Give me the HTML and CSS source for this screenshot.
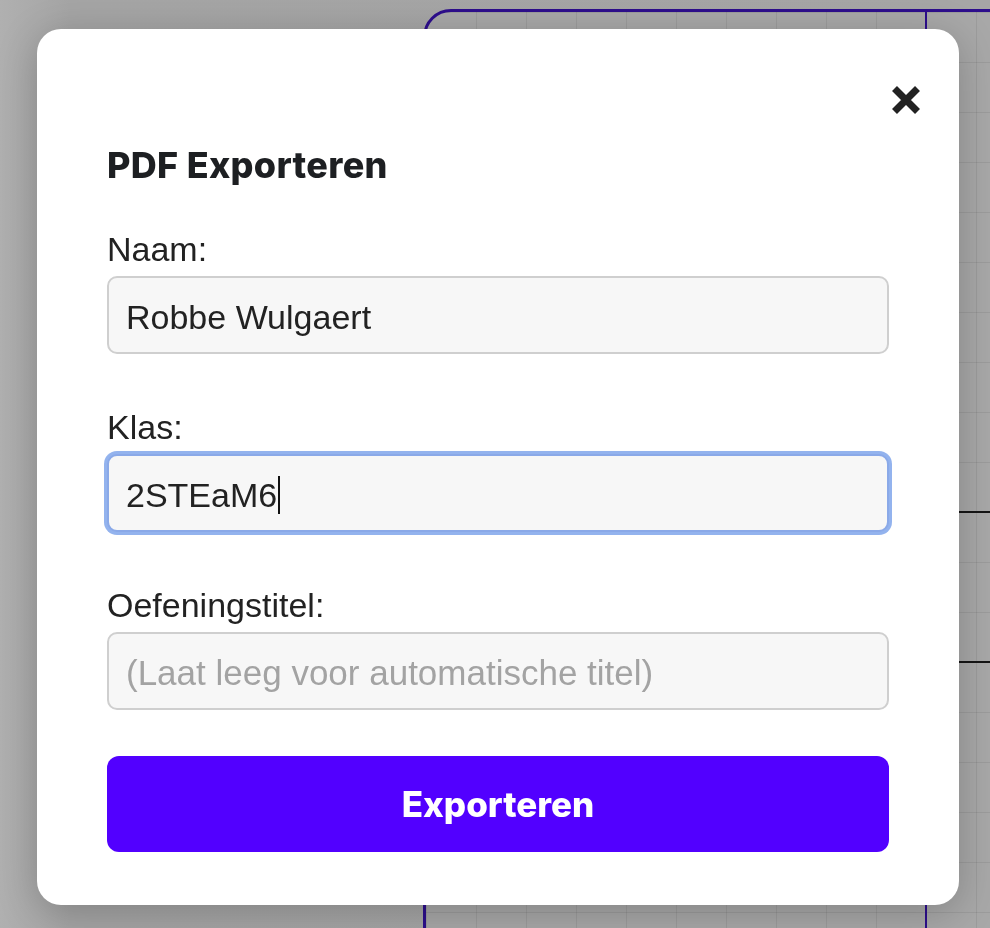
FILE: index.html
```html
<!DOCTYPE html>
<html lang="nl">
<head>
<meta charset="utf-8">
<title>PDF Exporteren</title>
<link rel="stylesheet" href="styles.css">
</head>
<body>
<div class="workspace">
  <div class="canvas">
    <div class="vline"></div>
    <div class="hline hline-a"></div>
    <div class="hline hline-b"></div>
  </div>
</div>
<div class="overlay">
  <div class="modal">
    <div class="close-row">
      <button class="close" aria-label="Sluiten">
        <svg viewBox="0 0 30 30" width="30" height="30" aria-hidden="true">
          <path d="M3.5 3.5 L26.5 26.5 M26.5 3.5 L3.5 26.5" stroke="#222" stroke-width="7" fill="none"/>
        </svg>
      </button>
    </div>
    <h2 class="title">PDF Exporteren</h2>
    <div class="field">
      <label class="label">Naam:</label>
      <div class="input">Robbe Wulgaert</div>
    </div>
    <div class="field">
      <label class="label">Klas:</label>
      <div class="input focused">2STEaM6<span class="caret"></span></div>
    </div>
    <div class="field last">
      <label class="label">Oefeningstitel:</label>
      <div class="input placeholder">(Laat leeg voor automatische titel)</div>
    </div>
    <button class="export">Exporteren</button>
  </div>
</div>
</body>
</html>
```
FILE: styles.css
```css
html, body {
  margin: 0;
  padding: 0;
}
body {
  width: 990px;
  height: 928px;
  overflow: hidden;
  position: relative;
  background: linear-gradient(to right, #b0b0b0 0px, #a5a5a5 70px, #a6a6a6 100%);
  font-family: "Liberation Sans", Arial, sans-serif;
}
.workspace {
  position: absolute;
  inset: 0;
}
.canvas {
  position: absolute;
  left: 423px;
  top: 9px;
  right: -40px;
  bottom: -40px;
  border: 3px solid #2d0e8c;
  border-top-left-radius: 28px;
  background-color: #a8a8a8;
  background-image:
    linear-gradient(to right, rgba(0,0,0,0.07) 1px, transparent 1px),
    linear-gradient(to bottom, rgba(0,0,0,0.07) 1px, transparent 1px);
  background-size: 50px 50px;
  background-position: 0 0;
}
.vline {
  position: absolute;
  left: 499px;
  top: 0;
  bottom: 0;
  width: 2px;
  background: #2d0e8c;
}
.hline {
  position: absolute;
  left: 500px;
  right: 0;
  height: 2px;
  background: #151515;
}
.hline-a { top: 499px; }
.hline-b { top: 649px; }

.overlay {
  position: fixed;
  inset: 0;
  box-sizing: border-box;
  padding: 6px 0 0 6px;
  display: flex;
  align-items: center;
  justify-content: center;
}
.modal {
  width: 922px;
  box-sizing: border-box;
  padding: 56px 70px 53px;
  background: #ffffff;
  border-radius: 24px;
  box-shadow: 0 8px 40px rgba(0,0,0,0.22);
}
.close-row {
  display: flex;
  justify-content: flex-end;
  margin-right: -32px;
  height: 30px;
}
.close {
  width: 30px;
  height: 30px;
  padding: 0;
  border: none;
  background: none;
  display: block;
}
.close svg { display: block; }
.title {
  margin: 28px 0 42px;
  font-family: Inter, Roboto, "Liberation Sans", sans-serif;
  font-weight: 800;
  font-size: 36px;
  line-height: 44px;
  letter-spacing: 0.3px;
  color: #1d1f22;
}
.field {
  margin-bottom: 53px;
}
.field.last {
  margin-bottom: 46px;
}
.label {
  display: block;
  font-size: 34px;
  line-height: 40px;
  color: #222;
  margin-bottom: 7px;
}
.input {
  height: 78px;
  box-sizing: border-box;
  border: 2px solid #cfcfcf;
  border-radius: 10px;
  background: #f7f7f7;
  padding: 4px 17px 0;
  display: flex;
  align-items: center;
  font-size: 34px;
  color: #222;
  white-space: nowrap;
}
.input.focused {
  border-color: #8aa9e8;
  box-shadow: 0 0 0 3px #93b3ee;
}
.input.placeholder {
  color: #a3a3a3;
  font-size: 35px;
}
.caret {
  display: inline-block;
  width: 2px;
  height: 38px;
  margin-left: 1px;
  background: #111;
}
.export {
  display: block;
  width: 100%;
  height: 96px;
  border: none;
  border-radius: 12px;
  background: #5200ff;
  color: #ffffff;
  font-family: Inter, Roboto, "Liberation Sans", sans-serif;
  font-weight: 800;
  font-size: 35px;
  padding: 0;
}
```
